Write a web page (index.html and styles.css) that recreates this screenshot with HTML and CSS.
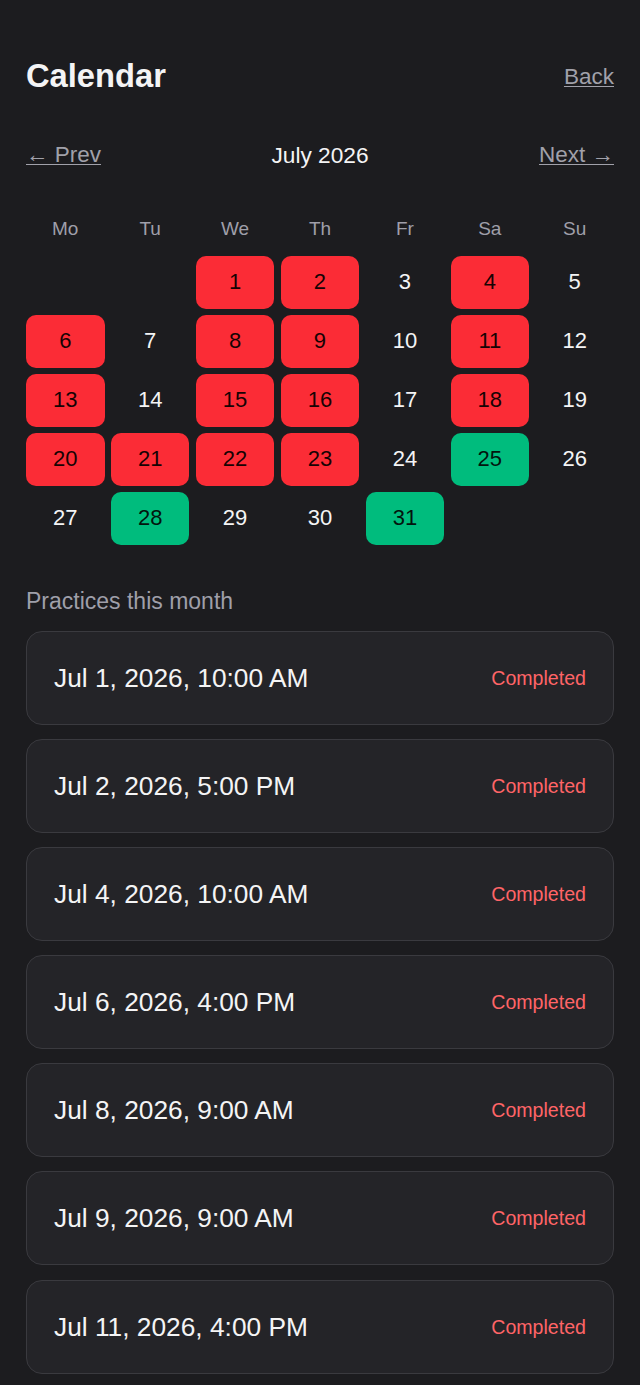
FILE: index.html
```html
<!DOCTYPE html>
<html lang="en">
<head>
<meta charset="utf-8">
<title>Calendar</title>
<link rel="stylesheet" href="styles.css">
</head>
<body>
<main class="page">
  <header class="header">
    <h1 class="title">Calendar</h1>
    <a class="link back" href="#">Back</a>
  </header>

  <nav class="month-nav">
    <a class="link" href="#">← Prev</a>
    <span class="month">July 2026</span>
    <a class="link" href="#">Next →</a>
  </nav>

  <div class="weekdays">
    <span>Mo</span><span>Tu</span><span>We</span><span>Th</span><span>Fr</span><span>Sa</span><span>Su</span>
  </div>

  <div class="days">
    <span class="day empty"></span>
    <span class="day empty"></span>
    <span class="day missed">1</span>
    <span class="day missed">2</span>
    <span class="day">3</span>
    <span class="day missed">4</span>
    <span class="day">5</span>

    <span class="day missed">6</span>
    <span class="day">7</span>
    <span class="day missed">8</span>
    <span class="day missed">9</span>
    <span class="day">10</span>
    <span class="day missed">11</span>
    <span class="day">12</span>

    <span class="day missed">13</span>
    <span class="day">14</span>
    <span class="day missed">15</span>
    <span class="day missed">16</span>
    <span class="day">17</span>
    <span class="day missed">18</span>
    <span class="day">19</span>

    <span class="day missed">20</span>
    <span class="day missed">21</span>
    <span class="day missed">22</span>
    <span class="day missed">23</span>
    <span class="day">24</span>
    <span class="day planned">25</span>
    <span class="day">26</span>

    <span class="day">27</span>
    <span class="day planned">28</span>
    <span class="day">29</span>
    <span class="day">30</span>
    <span class="day planned">31</span>
  </div>

  <h2 class="section-label">Practices this month</h2>

  <ul class="practices">
    <li class="practice"><span class="when">Jul 1, 2026, 10:00 AM</span><span class="status">Completed</span></li>
    <li class="practice"><span class="when">Jul 2, 2026, 5:00 PM</span><span class="status">Completed</span></li>
    <li class="practice"><span class="when">Jul 4, 2026, 10:00 AM</span><span class="status">Completed</span></li>
    <li class="practice"><span class="when">Jul 6, 2026, 4:00 PM</span><span class="status">Completed</span></li>
    <li class="practice"><span class="when">Jul 8, 2026, 9:00 AM</span><span class="status">Completed</span></li>
    <li class="practice"><span class="when">Jul 9, 2026, 9:00 AM</span><span class="status">Completed</span></li>
    <li class="practice"><span class="when">Jul 11, 2026, 4:00 PM</span><span class="status">Completed</span></li>
  </ul>
</main>
</body>
</html>
```

FILE: styles.css
```css
* {
  box-sizing: border-box;
}

html, body {
  margin: 0;
  padding: 0;
  background: #1c1c1f;
}

body {
  font-family: "Liberation Sans", Arial, sans-serif;
  color: #f4f4f5;
}

.page {
  padding: 57px 26px 40px;
}

.header {
  display: flex;
  justify-content: space-between;
  align-items: center;
}

.title {
  margin: 0;
  font-size: 32.7px;
  line-height: 37px;
  font-weight: 700;
  color: #f4f4f5;
}

.link {
  color: #a1a1aa;
  text-decoration: underline;
  text-underline-offset: 2px;
  text-decoration-thickness: 1px;
  font-size: 22.5px;
  line-height: 26px;
}

.back {
  margin-top: 2px;
}

.month-nav {
  margin-top: 48px;
  height: 26px;
  display: flex;
  justify-content: space-between;
  align-items: center;
  line-height: 26px;
}

.month {
  font-size: 22.7px;
  color: #f4f4f5;
}

.weekdays {
  margin-top: 50px;
  display: grid;
  grid-template-columns: repeat(7, 1fr);
  column-gap: 6.4px;
  font-size: 19px;
  line-height: 22px;
  color: #9f9fa9;
  text-align: center;
}

.days {
  margin-top: 16px;
  display: grid;
  grid-template-columns: repeat(7, 1fr);
  gap: 6.4px;
}

.day {
  height: 52.6px;
  display: flex;
  align-items: center;
  justify-content: center;
  font-size: 22px;
  color: #f4f4f5;
  border-radius: 10px;
}

.day.missed {
  background: #fb2c36;
  color: #160304;
}

.day.planned {
  background: #00bc7d;
  color: #03150e;
}

.section-label {
  margin: 43px 0 0;
  font-size: 23px;
  line-height: 26px;
  font-weight: 400;
  color: #9f9fa9;
}

.practices {
  list-style: none;
  margin: 17px 0 0;
  padding: 0;
  display: flex;
  flex-direction: column;
  gap: 14.2px;
}

.practice {
  display: flex;
  justify-content: space-between;
  align-items: center;
  padding: 31px 27px;
  background: #242428;
  border: 1px solid #3a3a3f;
  border-radius: 16px;
}

.when {
  font-size: 26.3px;
  line-height: 30px;
  color: #f4f4f5;
}

.status {
  font-size: 19.6px;
  line-height: 24px;
  color: #ff6467;
}
```
